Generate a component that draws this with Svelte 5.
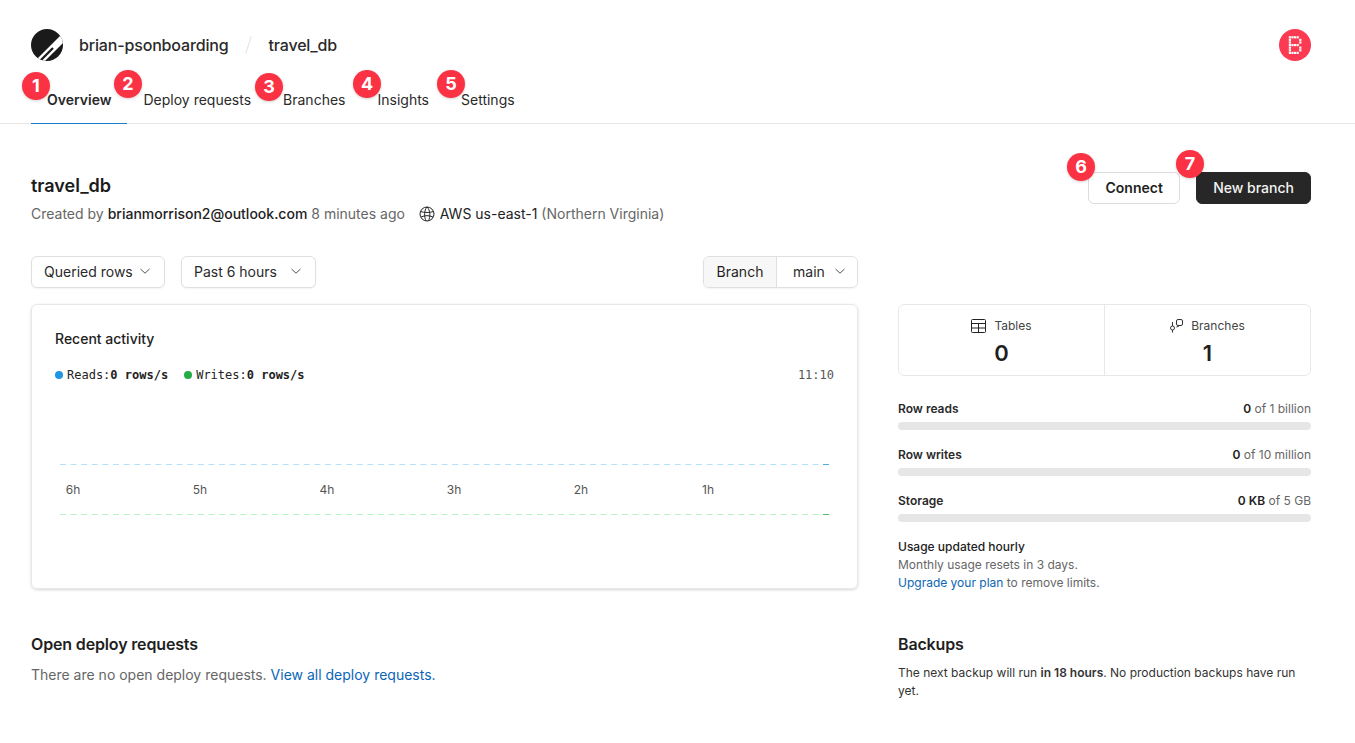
<script lang="ts">
    const tabs = ["Overview", "Deploy requests", "Branches", "Insights", "Settings"];

    // numbered callouts drawn over the screenshot
    const callouts = [
        { n: 1, x: 36, y: 86 },
        { n: 2, x: 128, y: 84 },
        { n: 3, x: 269, y: 87 },
        { n: 4, x: 367, y: 84 },
        { n: 5, x: 451, y: 84 },
        { n: 6, x: 1081, y: 167 },
        { n: 7, x: 1190, y: 164 },
    ];

    const usage = [
        { label: "Row reads", value: "0", limit: "of 1 billion" },
        { label: "Row writes", value: "0", limit: "of 10 million" },
        { label: "Storage", value: "0 KB", limit: "of 5 GB" },
    ];

    const hours = [
        { label: "6h", x: 18 },
        { label: "5h", x: 145 },
        { label: "4h", x: 272 },
        { label: "3h", x: 399 },
        { label: "2h", x: 526 },
        { label: "1h", x: 653 },
    ];

    // pixel grid of the avatar's "B"
    const avatarDots: number[][] = [];
    for (let row = 0; row < 7; row++) {
        for (let col = 0; col < 5; col++) {
            const bar = row === 0 || row === 3 || row === 6;
            const edge = bar ? col < 4 : col === 0 || col === 4;
            if (edge) avatarDots.push([col, row]);
        }
    }
</script>

{#snippet chevron()}
    <svg class="chevron" width="12" height="12" viewBox="0 0 12 12" fill="none">
        <path d="M1.5 4 L6 8.2 L10.5 4" stroke="#555" stroke-width="1" />
    </svg>
{/snippet}

<div class="page">
    <header class="topbar">
        <div class="crumbs">
            <svg class="logo" width="32" height="32" viewBox="0 0 32 32">
                <defs>
                    <clipPath id="logo-disc"><circle cx="16" cy="16" r="16" /></clipPath>
                </defs>
                <circle cx="16" cy="16" r="16" fill="#1a1a1a" />
                <g clip-path="url(#logo-disc)">
                    <path d="M7 34 L34 7" stroke="#fff" stroke-width="7" />
                    <path d="M8 33 L22 19" stroke="#1a1a1a" stroke-width="2.2" />
                </g>
            </svg>
            <span class="crumb">brian-psonboarding</span>
            <span class="slash"></span>
            <span class="crumb">travel_db</span>
            <div class="avatar">
                <svg width="14" height="18" viewBox="0 0 14 18">
                    {#each avatarDots as d}
                        <rect x={d[0] * 2.6 + 0.8} y={d[1] * 2.6 + 0.2} width="2.2" height="2.2" fill="#fff" />
                    {/each}
                </svg>
            </div>
        </div>
        <nav class="tabs">
            {#each tabs as tab, i}
                <a class="tab" class:active={i === 0} href="#top">{tab}</a>
            {/each}
        </nav>
    </header>

    <main class="content">
        <section class="title-row">
            <div>
                <h1>travel_db</h1>
                <p class="meta">
                    Created by <span class="email">brianmorrison2@outlook.com</span> 8 minutes ago
                    <svg class="globe" width="16" height="16" viewBox="0 0 16 16" fill="none" stroke="#222" stroke-width="1">
                        <circle cx="8" cy="8" r="7" />
                        <path d="M1.5 5.5 C5 6.8 11 6.8 14.5 5.5" />
                        <path d="M2 11 C6 9.2 10 9.2 14 11" />
                        <path d="M8 1 C5 4 5 11 7 15" />
                        <path d="M8 1 C11.5 4 11.5 11 9.5 15" />
                    </svg>
                    <span class="dark">AWS us-east-1</span> (Northern Virginia)
                </p>
            </div>
            <div class="actions">
                <button class="btn">Connect</button>
                <button class="btn primary">New branch</button>
            </div>
        </section>

        <section class="columns">
            <div class="left">
                <div class="filters">
                    <button class="select q">Queried rows {@render chevron()}</button>
                    <button class="select p">Past 6 hours {@render chevron()}</button>
                    <div class="branch-select">
                        <span class="branch-label">Branch</span>
                        <button class="branch-value">main {@render chevron()}</button>
                    </div>
                </div>

                <div class="card">
                    <h2>Recent activity</h2>
                    <div class="legend">
                        <span class="dot blue"></span><span>Reads:<b>0 rows/s</b></span>
                        <span class="dot green"></span><span>Writes:<b>0 rows/s</b></span>
                        <span class="time">11:10</span>
                    </div>
                    <svg class="chart" width="779" height="120" viewBox="0 0 779 120">
                        <line x1="5" x2="768" y1="0.5" y2="0.5" stroke="#b5e2fb" stroke-dasharray="6 4.6" />
                        <line x1="768" x2="774" y1="0.5" y2="0.5" stroke="#4fa9e3" />
                        {#each hours as h}
                            <text x={h.x} y="30" text-anchor="middle" class="tick">{h.label}</text>
                        {/each}
                        <line x1="5" x2="768" y1="50.5" y2="50.5" stroke="#b8f2c4" stroke-dasharray="6 4.6" />
                        <line x1="768" x2="774" y1="50.5" y2="50.5" stroke="#4dbb68" />
                    </svg>
                </div>

                <div class="deploys">
                    <h3>Open deploy requests</h3>
                    <p>There are no open deploy requests. <a href="#top">View all deploy requests.</a></p>
                </div>
            </div>

            <aside class="right">
                <div class="stats">
                    <div class="stat">
                        <div class="stat-label">
                            <svg width="15" height="14" viewBox="0 0 15 14" fill="none" stroke="#222" stroke-width="1">
                                <rect x="0.5" y="0.5" width="14" height="13" rx="1" />
                                <path d="M0.5 4.5 H14.5 M0.5 9 H14.5 M7.5 4.5 V13.5" />
                            </svg>
                            Tables
                        </div>
                        <div class="stat-value">0</div>
                    </div>
                    <div class="stat">
                        <div class="stat-label">
                            <svg width="13" height="14" viewBox="0 0 13 14" fill="none" stroke="#333" stroke-width="1">
                                <rect x="6.5" y="0.5" width="6" height="6" rx="1.5" />
                                <circle cx="2.5" cy="9" r="2" />
                                <path d="M2.5 3 V7 M2.5 11 V13.5 M6.5 8 L9 7" />
                            </svg>
                            Branches
                        </div>
                        <div class="stat-value">1</div>
                    </div>
                </div>

                <div class="usage">
                    {#each usage as u}
                        <div class="usage-row">
                            <div class="usage-head">
                                <span class="usage-label">{u.label}</span>
                                <span class="usage-limit"><b>{u.value}</b> {u.limit}</span>
                            </div>
                            <div class="bar"></div>
                        </div>
                    {/each}
                </div>

                <div class="note">
                    <div class="note-title">Usage updated hourly</div>
                    <div>Monthly usage resets in 3 days.</div>
                    <div><a href="#top">Upgrade your plan</a> to remove limits.</div>
                </div>

                <div class="backups">
                    <h3>Backups</h3>
                    <p>The next backup will run <b>in 18 hours</b>. No production backups have run yet.</p>
                </div>
            </aside>
        </section>
    </main>

    {#each callouts as c}
        <span class="callout" style="left: {c.x}px; top: {c.y}px;">{c.n}</span>
    {/each}
</div>

<style>
    :global(body) {
        margin: 0;
        background: #fff;
    }

    .page {
        position: relative;
        height: 743px;
        overflow: hidden;
        font-family: Inter, "Liberation Sans", sans-serif;
        font-size: 14px;
        color: #1f1f1f;
    }

    .topbar {
        height: 94px;
        border-bottom: 1px solid #e6e6e6;
        padding: 29px 44px 0 31px;
    }

    .crumbs {
        display: flex;
        align-items: center;
        height: 32px;
    }

    .logo {
        margin-right: 16px;
    }

    .crumb {
        font-size: 16px;
        font-weight: 500;
        letter-spacing: -0.16px;
        color: #2a2a2a;
    }

    .slash {
        width: 1px;
        height: 18px;
        margin: 0 19px 0 20px;
        background: #e2e2e2;
        transform: rotate(18deg);
    }

    .avatar {
        margin-left: auto;
        width: 32px;
        height: 32px;
        border-radius: 50%;
        background: #fc3a52;
        display: flex;
        align-items: center;
        justify-content: center;
    }

    .tabs {
        display: flex;
        height: 62px;
    }

    .tab {
        box-sizing: border-box;
        height: 63px;
        padding: 30px 16px 0;
        line-height: 17px;
        text-decoration: none;
        border-bottom: 1px solid transparent;
    }

    .tab.active {
        font-weight: 600;
        border-bottom-color: #1f7ec9;
    }

    .content {
        padding: 0 44px 0 31px;
    }

    .title-row {
        display: flex;
        justify-content: space-between;
        padding-top: 48px;
        height: 132px;
        box-sizing: border-box;
    }

    h1 {
        margin: 4px 0 0;
        font-size: 18px;
        line-height: 20px;
        font-weight: 600;
        color: #1b1b1b;
    }

    .meta {
        margin: 8px 0 0;
        font-size: 14px;
        line-height: 20px;
        color: #666;
    }

    .dark {
        color: #222;
    }

    .email {
        color: #222;
        font-weight: 500;
    }

    .globe {
        vertical-align: -3px;
        margin-left: 10px;
        margin-right: 1px;
    }

    .actions {
        display: flex;
        gap: 16px;
    }

    button {
        font-family: inherit;
        font-size: 14px;
        cursor: pointer;
    }

    .btn {
        height: 32px;
        padding: 0 16px 2px;
        border: 1px solid #dcdcdc;
        border-radius: 6px;
        background: #fff;
        color: #1f1f1f;
        font-weight: 600;
    }

    .btn:first-child {
        width: 92px;
    }

    .btn.primary {
        background: #272727;
        border-color: #272727;
        color: #f2f2f2;
        font-weight: 500;
    }

    .columns {
        display: grid;
        grid-template-columns: 827px 413px;
        column-gap: 40px;
        align-items: start;
    }

    .filters {
        display: flex;
        height: 32px;
        margin-bottom: 16px;
    }

    .select {
        display: flex;
        align-items: center;
        justify-content: space-between;
        box-sizing: border-box;
        height: 32px;
        padding: 0 13px 2px 12px;
        border: 1px solid #e0e0e0;
        border-radius: 6px;
        background: #fff;
        color: #2a2a2a;
        box-shadow: 0 1px 2px rgba(0, 0, 0, 0.05);
    }

    .select.q {
        width: 134px;
        margin-right: 16px;
    }

    .select.p {
        width: 135px;
    }

    .branch-select {
        margin-left: auto;
        display: flex;
        height: 32px;
        box-sizing: border-box;
        width: 155px;
        border: 1px solid #e0e0e0;
        border-radius: 6px;
        overflow: hidden;
        box-shadow: 0 1px 2px rgba(0, 0, 0, 0.05);
    }

    .branch-label {
        width: 72px;
        line-height: 30px;
        text-align: center;
        background: #f7f7f7;
        border-right: 1px solid #e0e0e0;
    }

    .branch-value {
        flex: 1;
        display: flex;
        align-items: center;
        gap: 9px;
        padding: 0 0 2px 16px;
        border: 0;
        background: #fff;
        color: #2a2a2a;
    }

    .chevron {
        flex: none;
    }

    .card {
        box-sizing: border-box;
        height: 285px;
        padding: 25px 23px 0;
        border: 1px solid #e8e8e8;
        border-radius: 6px;
        box-shadow: 0 1px 3px rgba(0, 0, 0, 0.16);
    }

    h2 {
        margin: 0;
        font-size: 14px;
        line-height: 17px;
        font-weight: 500;
        color: #222;
    }

    .legend {
        display: flex;
        align-items: center;
        margin-top: 21px;
        height: 14px;
        font-family: "DejaVu Sans Mono", "Liberation Mono", monospace;
        font-size: 12px;
        color: #222;
    }

    .legend b {
        font-weight: 700;
    }

    .dot {
        width: 8px;
        height: 8px;
        border-radius: 50%;
        margin-right: 4px;
    }

    .dot.blue {
        background: #2095e3;
    }

    .dot.green {
        background: #22ac47;
        margin-left: 16px;
    }

    .time {
        margin-left: auto;
        color: #555;
    }

    .chart {
        display: block;
        margin-top: 82px;
    }

    .tick {
        font-size: 12px;
        fill: #555;
        font-family: Inter, sans-serif;
    }

    .deploys {
        margin-top: 45px;
    }

    h3 {
        margin: 0;
        font-size: 16px;
        line-height: 20px;
        font-weight: 600;
        letter-spacing: -0.15px;
        color: #1f1f1f;
    }

    .deploys p {
        margin: 11px 0 0;
        line-height: 20px;
        color: #666;
    }

    a {
        color: #0b66b5;
        text-decoration: none;
    }

    a.tab {
        color: #2a2a2a;
    }

    .stats {
        display: grid;
        grid-template-columns: 205px 1fr;
        box-sizing: border-box;
        height: 72px;
        margin-top: 48px;
        border: 1px solid #e8e8e8;
        border-radius: 6px;
    }

    .stat {
        text-align: center;
        padding-top: 13px;
    }

    .stat + .stat {
        border-left: 1px solid #e8e8e8;
    }

    .stat-label {
        display: flex;
        align-items: center;
        justify-content: center;
        gap: 8px;
        font-size: 12px;
        line-height: 16px;
        color: #444;
    }

    .stat-value {
        margin-top: 6px;
        font-size: 22px;
        line-height: 26px;
        font-weight: 600;
        color: #1f1f1f;
    }

    .usage {
        margin-top: 25px;
    }

    .usage-row {
        height: 46px;
    }

    .usage-head {
        display: flex;
        justify-content: space-between;
        font-size: 12px;
        line-height: 16px;
    }

    .usage-label {
        font-weight: 600;
        color: #2a2a2a;
    }

    .usage-limit {
        color: #666;
    }

    .usage-limit b {
        font-weight: 600;
        color: #222;
    }

    .bar {
        height: 8px;
        margin-top: 5px;
        border-radius: 4px;
        background: #e6e6e6;
    }

    .note {
        margin-top: -1px;
        font-size: 12px;
        line-height: 18px;
        color: #666;
    }

    .note-title {
        font-weight: 500;
        color: #222;
    }

    .backups {
        margin-top: 42px;
    }

    .backups p {
        margin: 10px 0 0;
        font-size: 12px;
        line-height: 18px;
        color: #333;
    }

    .backups b {
        font-weight: 600;
    }

    .callout {
        position: absolute;
        width: 28px;
        height: 28px;
        margin: -14px 0 0 -14px;
        border-radius: 50%;
        background: #fb3144;
        color: #fff;
        font-size: 18px;
        font-weight: 700;
        line-height: 28px;
        text-align: center;
        box-shadow: 0 1px 3px rgba(0, 0, 0, 0.18);
    }
</style>
